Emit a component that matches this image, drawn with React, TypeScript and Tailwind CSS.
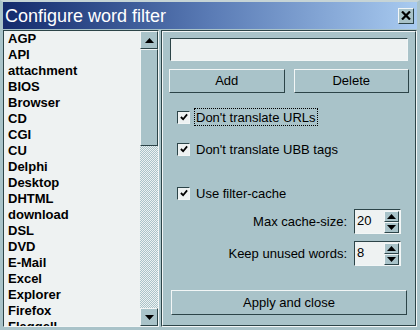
import React from "react";

const words = [
  "AGP", "API", "attachment", "BIOS", "Browser", "CD", "CGI", "CU", "Delphi", "Desktop",
  "DHTML", "download", "DSL", "DVD", "E-Mail", "Excel", "Explorer", "Firefox", "Flaggell",
];

const raised = "border border-t-[#f2f6f6] border-l-[#f2f6f6] border-r-[#2c4448] border-b-[#2c4448]";
const sunken = "border border-t-[#2c4448] border-l-[#2c4448] border-r-[#f2f6f6] border-b-[#f2f6f6]";

function Arrow({ up }: { up?: boolean }) {
  return (
    <svg width="9" height="5" viewBox="0 0 9 5">
      <polygon points={up ? "4.5,0 9,5 0,5" : "0,0 9,0 4.5,5"} fill="#000" />
    </svg>
  );
}

function Check({ checked, label, focus }: { checked: boolean; label: string; focus?: boolean }) {
  return (
    <div className="flex items-center h-[18px]">
      <div className={`w-[13px] h-[13px] bg-[#eef2f2] ${sunken} flex items-center justify-center`}>
        {checked && (
          <svg width="8" height="8" viewBox="0 0 9 9">
            <path d="M1 4.5 L3.5 7 L8 1.5" stroke="#000" strokeWidth="2" fill="none" />
          </svg>
        )}
      </div>
      <span
        className={`ml-[4px] px-[1px] h-[18px] leading-[18px] ${focus ? "border border-dotted border-black" : "border border-transparent"}`}
      >
        {label}
      </span>
    </div>
  );
}

function Spin({ value }: { value: string }) {
  return (
    <div className={`w-[47px] h-[25px] bg-[#eef2f2] ${sunken} flex items-center justify-between pl-[2px] pr-[1px]`}>
      <span className="leading-none -mt-[3px]">{value}</span>
      <div className="flex flex-col">
        <div className={`w-[15px] h-[11px] bg-[#a9c3c9] ${raised} flex items-center justify-center`}>
          <Arrow up />
        </div>
        <div className={`w-[15px] h-[11px] bg-[#a9c3c9] ${raised} flex items-center justify-center`}>
          <Arrow />
        </div>
      </div>
    </div>
  );
}

export default function App() {
  return (
    <div className="w-[420px] h-[330px] bg-[#a9c3c9] border-t-2 border-t-[#c6d4d6] border-x-[3px] border-x-[#a9c3c9] border-b-[3px] border-b-[#a9c3c9] flex flex-col overflow-hidden text-[13px] text-black [font-family:'Liberation_Sans',Arial,sans-serif]">
      {/* Title bar */}
      <div className="h-[27px] shrink-0 bg-gradient-to-r from-[#142a6c] via-[#5a7bb5] to-[#a9cbf0] flex items-center justify-between pl-[2px] pr-[3px]">
        <span className="text-white text-[18px] leading-none">Configure word filter</span>
        <div className={`w-[16px] h-[16px] bg-[#a9c3c9] ${raised} flex items-center justify-center`}>
          <svg width="10" height="9" viewBox="0 0 10 9">
            <path d="M1 0.5 L9 8.5 M9 0.5 L1 8.5" stroke="#000" strokeWidth="2.2" />
          </svg>
        </div>
      </div>

      {/* Body */}
      <div className="flex flex-1 min-h-0 pt-[1px]">
        {/* Word list */}
        <div className={`w-[156px] flex bg-[#eef2f2] ${sunken}`}>
          <div className="flex-1 overflow-hidden pl-[4px] font-bold">
            {words.map((w) => (
              <div key={w} className="h-[16px] leading-[16px]">{w}</div>
            ))}
          </div>
          <div className="w-[18px] flex flex-col">
            <div className={`h-[18px] bg-[#a9c3c9] ${raised} flex items-center justify-center`}>
              <Arrow up />
            </div>
            <div className={`h-[97px] bg-[#a9c3c9] ${raised}`} />
            <div className="flex-1 bg-[repeating-conic-gradient(#a9c3c9_0_25%,#eef2f2_0_50%)] [background-size:2px_2px]" />
            <div className={`h-[18px] bg-[#a9c3c9] ${raised} flex items-center justify-center`}>
              <Arrow />
            </div>
          </div>
        </div>

        {/* Options panel */}
        <div className="ml-[2px] flex-1 border border-[#2c4448] border-r-[#f2f6f6] border-b-[#f2f6f6]">
          <div className="h-full border border-[#f2f6f6] border-r-[#2c4448] border-b-[#2c4448] px-[6px] pt-[6px] flex flex-col">
            <div className={`h-[23px] bg-[#eef2f2] ${sunken} mx-[1px]`} />
            <div className="flex gap-[9px] mt-[8px]">
              <div className={`flex-1 h-[24px] ${raised} flex items-center justify-center`}>Add</div>
              <div className={`flex-1 h-[24px] ${raised} flex items-center justify-center`}>Delete</div>
            </div>
            <div className="pl-[8px] mt-[15px] flex flex-col">
              <Check checked label="Don't translate URLs" focus />
              <div className="h-[14px]" />
              <Check checked label="Don't translate UBB tags" />
              <div className="h-[26px]" />
              <Check checked label="Use filter-cache" />
            </div>
            <div className="flex flex-col items-end pr-[8px] mt-[7px] gap-[7px]">
              <div className="flex items-center gap-[7px]">
                <span>Max cache-size:</span>
                <Spin value="20" />
              </div>
              <div className="flex items-center gap-[7px]">
                <span>Keep unused words:</span>
                <Spin value="8" />
              </div>
            </div>
            <div className={`mt-[24px] mx-[2px] h-[25px] ${raised} flex items-center justify-center`}>Apply and close</div>
          </div>
        </div>
      </div>
    </div>
  );
}
